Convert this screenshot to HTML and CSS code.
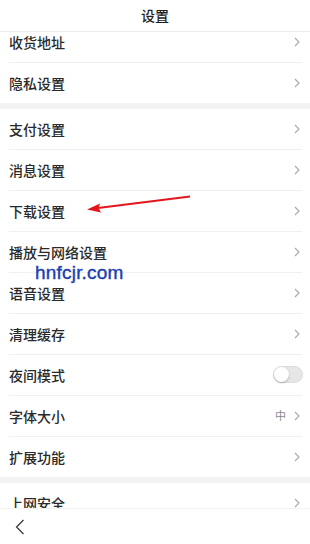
FILE: index.html
```html
<!DOCTYPE html>
<html lang="zh-CN">
<head>
<meta charset="utf-8">
<title>设置</title>
<link rel="stylesheet" href="styles.css">
</head>
<body>
<div class="screen">
  <header class="topbar"><span class="title">设置</span></header>
  <main class="content">
    <div class="list">
      <section class="group">
        <div class="row"><span class="label">收货地址</span><svg class="chev" viewBox="0 0 6 10"><path d="M1 1 L5 5 L1 9"/></svg></div>
        <div class="row"><span class="label">隐私设置</span><svg class="chev" viewBox="0 0 6 10"><path d="M1 1 L5 5 L1 9"/></svg></div>
      </section>
      <section class="group">
        <div class="row"><span class="label">支付设置</span><svg class="chev" viewBox="0 0 6 10"><path d="M1 1 L5 5 L1 9"/></svg></div>
        <div class="row"><span class="label">消息设置</span><svg class="chev" viewBox="0 0 6 10"><path d="M1 1 L5 5 L1 9"/></svg></div>
        <div class="row"><span class="label">下载设置</span><svg class="chev" viewBox="0 0 6 10"><path d="M1 1 L5 5 L1 9"/></svg></div>
        <div class="row"><span class="label">播放与网络设置</span><svg class="chev" viewBox="0 0 6 10"><path d="M1 1 L5 5 L1 9"/></svg></div>
        <div class="row"><span class="label">语音设置</span><svg class="chev" viewBox="0 0 6 10"><path d="M1 1 L5 5 L1 9"/></svg></div>
        <div class="row"><span class="label">清理缓存</span><svg class="chev" viewBox="0 0 6 10"><path d="M1 1 L5 5 L1 9"/></svg></div>
        <div class="row"><span class="label">夜间模式</span><span class="toggle"><span class="knob"></span></span></div>
        <div class="row"><span class="label">字体大小</span><span class="value">中</span><svg class="chev" viewBox="0 0 6 10"><path d="M1 1 L5 5 L1 9"/></svg></div>
        <div class="row"><span class="label">扩展功能</span><svg class="chev" viewBox="0 0 6 10"><path d="M1 1 L5 5 L1 9"/></svg></div>
      </section>
      <section class="group">
        <div class="row"><span class="label">上网安全</span><svg class="chev" viewBox="0 0 6 10"><path d="M1 1 L5 5 L1 9"/></svg></div>
      </section>
    </div>
  </main>
  <footer class="bottombar">
    <svg class="back" viewBox="0 0 10 16"><path d="M8.5 1 L1.5 8 L8.5 15"/></svg>
  </footer>

  <svg class="arrow" viewBox="0 0 310 544" width="310" height="544">
    <line x1="190" y1="196.5" x2="98" y2="208" />
    <polygon points="87,209.5 100,203.5 98.5,208 101,212.5" />
  </svg>
  <span class="watermark">hnfcjr.com</span>
</div>
</body>
</html>
```

FILE: styles.css
```css
* { box-sizing: border-box; }
html, body { margin: 0; padding: 0; background: #fff; }
body {
  font-family: "Noto Sans CJK SC", "Noto Sans", "Liberation Sans", sans-serif;
  color: #333;
}
.screen {
  position: relative;
  width: 310px;
  height: 544px;
  display: flex;
  flex-direction: column;
  overflow: hidden;
  background: #fff;
}
.topbar {
  height: 32px;
  flex: none;
  display: flex;
  align-items: center;
  justify-content: center;
  border-bottom: 1px solid #ededed;
  background: #fff;
}
.title {
  font-size: 14px;
  font-weight: 500;
  color: #1e1e1e;
  line-height: 1;
  margin-top: -1px;
}
.content {
  flex: 1;
  overflow: hidden;
  background: #fff;
}
.list {
  margin-top: -10px;
  display: flex;
  flex-direction: column;
  gap: 6px;
  background: #f3f3f3;
}
.group {
  background: #fff;
  display: flex;
  flex-direction: column;
}
.row {
  height: 41px;
  margin: 0 8px 0 9px;
  display: flex;
  align-items: center;
  border-bottom: 1px solid #f0f0f0;
  padding-bottom: 1px;
}
.row:last-child {
  height: 40px;
  border-bottom: none;
  padding-bottom: 0;
}
.label {
  flex: 1;
  font-size: 14px;
  font-weight: 500;
  line-height: 1;
  color: #2a2a2a;
}
.value {
  font-size: 11px;
  color: #888;
  margin-right: 8px;
  line-height: 1;
}
.chev {
  width: 6px;
  height: 10px;
  margin-right: 2px;
  fill: none;
  stroke: #a8a8a8;
  stroke-width: 1.1;
}
.toggle {
  position: relative;
  width: 30px;
  height: 17px;
  border-radius: 9px;
  background: #e6e6e6;
  border: 1px solid #dcdcdc;
  margin-right: -1px;
}
.knob {
  position: absolute;
  left: 0;
  top: 0;
  width: 15px;
  height: 15px;
  border-radius: 50%;
  background: #fff;
  box-shadow: 0 1px 2px rgba(0,0,0,0.25);
}
.bottombar {
  height: 36px;
  flex: none;
  background: #fff;
  border-top: 1px solid #f2f2f2;
  display: flex;
  align-items: center;
  padding-left: 15px;
}
.back {
  width: 10px;
  height: 16px;
  fill: none;
  stroke: #333;
  stroke-width: 1.2;
}
.arrow {
  position: absolute;
  left: 0;
  top: 0;
  pointer-events: none;
}
.arrow line {
  stroke: #e3161c;
  stroke-width: 2;
}
.arrow polygon {
  fill: #e3161c;
}
.watermark {
  position: absolute;
  left: 35px;
  top: 262px;
  font-family: "Liberation Sans", Arial, sans-serif;
  font-size: 19px;
  line-height: 22px;
  color: #1c3fb0;
  letter-spacing: 0.2px;
  -webkit-text-stroke: 0.4px #1c3fb0;
}
```
